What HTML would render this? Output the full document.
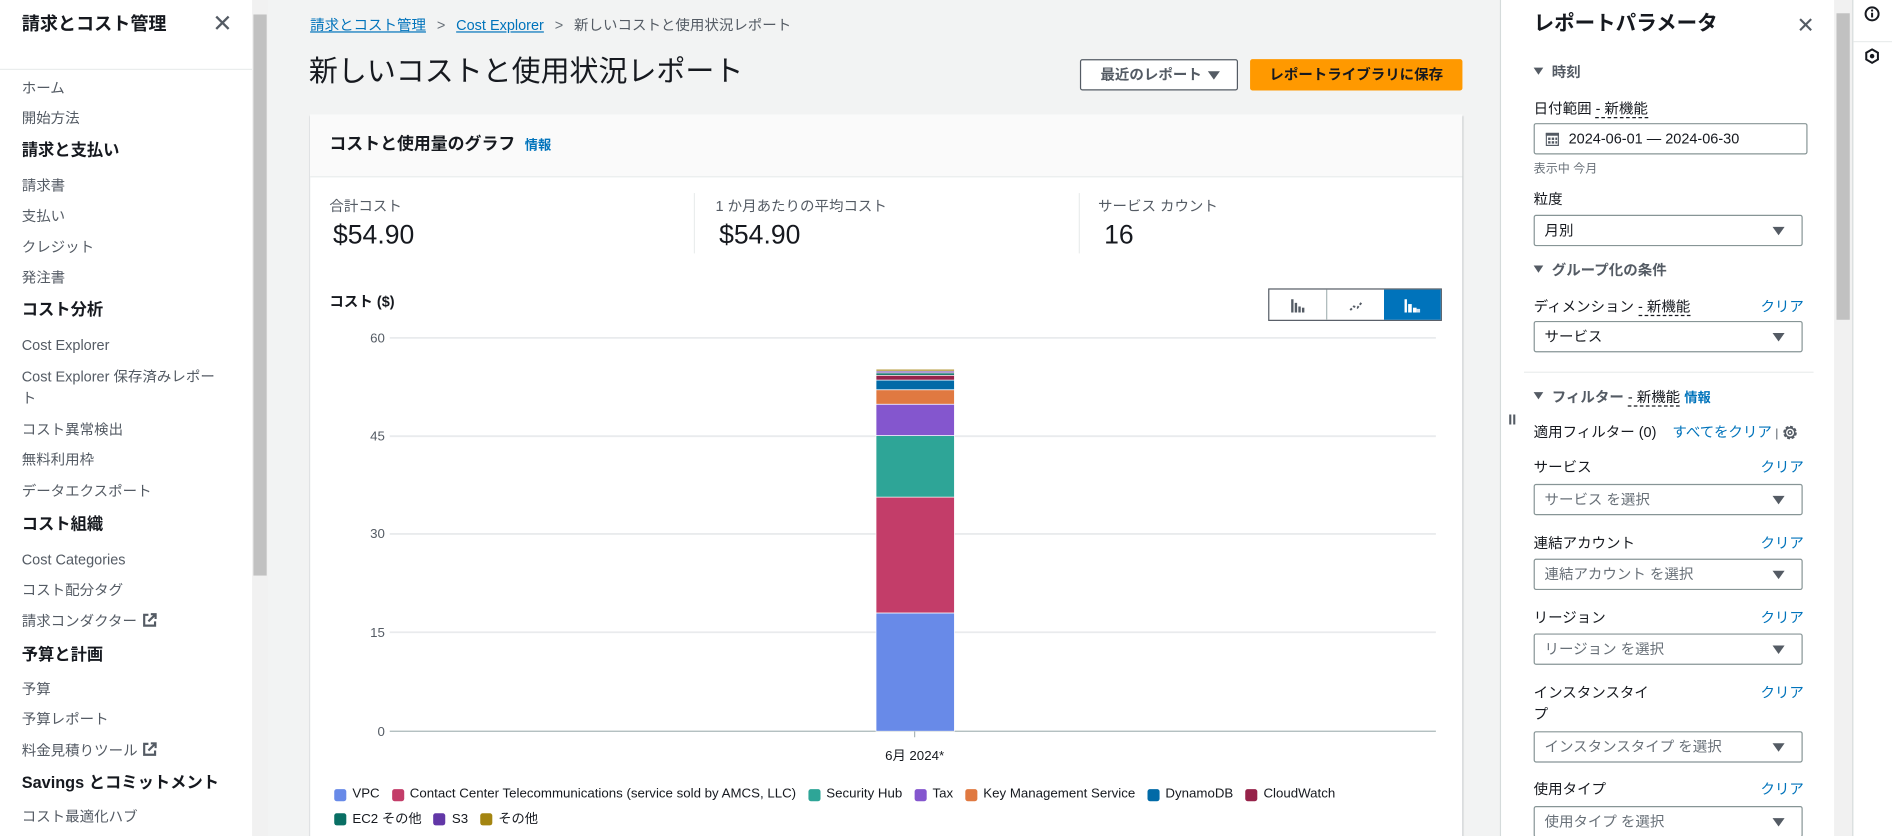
<!DOCTYPE html>
<html><head><meta charset="utf-8"><style>
*{box-sizing:border-box;margin:0;padding:0}
html,body{width:1892px;height:836px;overflow:hidden;background:#f2f3f3}
#clip{position:relative;width:1892px;height:836px;overflow:hidden}
#w{position:absolute;left:0;top:0;width:1568px;height:693px;overflow:hidden;transform:scale(1.20663);transform-origin:0 0;font-family:"Liberation Sans","Noto Sans CJK JP",sans-serif;color:#16191f;font-size:12px}
.a{position:absolute;white-space:nowrap}
.nav{left:0;top:0;width:209px;height:693px;background:#fff}
.ni{position:absolute;left:18px;font-size:12px;color:#545b64;line-height:16px}
.nh{position:absolute;left:18px;font-size:13.5px;font-weight:bold;color:#16191f;line-height:16px}
.lnk{color:#0073bb}
.sel{position:absolute;border:1px solid #879596;background:#fff;border-radius:2px;height:26px;font-size:12px;line-height:24px;padding-left:8px;color:#16191f}
.sel.ph{color:#687078}
.tri{position:absolute;right:14px;top:9px;width:0;height:0;border-left:5px solid transparent;border-right:5px solid transparent;border-top:7px solid #545b64}
.lbl{position:absolute;left:1271px;font-size:12px;line-height:16px;color:#16191f}
.clr{position:absolute;right:73px;font-size:12px;color:#0073bb;line-height:16px}
.dash{border-bottom:1px dashed #16191f}
.sh{position:absolute;left:1271px;font-size:12px;font-weight:bold;color:#545b64;line-height:16px}
.sh:before{content:"";display:inline-block;border-left:4px solid transparent;border-right:4px solid transparent;border-top:6px solid #545b64;margin-right:7px;vertical-align:2px}
.lg{display:inline-flex;align-items:center;margin-right:10px;font-size:11px;color:#16191f}
.lg i{display:inline-block;width:10px;height:10px;border-radius:2px;margin-right:5px}
.ext{display:inline-block;margin-left:4px;vertical-align:-1px}
</style></head><body><div id="clip"><div id="w">
<div class="a nav">
<div class="a" style="left:18px;top:12px;font-size:15px;font-weight:bold;line-height:18px">請求とコスト管理</div>
<div class="a" style="left:176px;top:9px;font-size:20px;color:#545b64;line-height:22px">✕</div>
<div class="a" style="left:0;top:57px;width:209px;height:1px;background:#eaeded"></div>
<div class="ni" style="top:65px">ホーム</div>
<div class="ni" style="top:90px">開始方法</div>
<div class="nh" style="top:117px">請求と支払い</div>
<div class="ni" style="top:146px">請求書</div>
<div class="ni" style="top:171px">支払い</div>
<div class="ni" style="top:197px">クレジット</div>
<div class="ni" style="top:222px">発注書</div>
<div class="nh" style="top:249px">コスト分析</div>
<div class="ni" style="top:278px">Cost Explorer</div>
<div class="ni" style="top:304px">Cost Explorer 保存済みレポー</div>
<div class="ni" style="top:322px">ト</div>
<div class="ni" style="top:348px">コスト異常検出</div>
<div class="ni" style="top:373px">無料利用枠</div>
<div class="ni" style="top:399px">データエクスポート</div>
<div class="nh" style="top:427px">コスト組織</div>
<div class="ni" style="top:456px">Cost Categories</div>
<div class="ni" style="top:481px">コスト配分タグ</div>
<div class="ni" style="top:507px">請求コンダクター<svg class="ext" width="12" height="12" viewBox="0 0 12 12"><path d="M5 1.5H1.5V10.5H10.5V7" fill="none" stroke="#545b64" stroke-width="1.8"/><path d="M7 1H11V5M11 1L5 7" fill="none" stroke="#545b64" stroke-width="1.8"/></svg></div>
<div class="nh" style="top:535px">予算と計画</div>
<div class="ni" style="top:563px">予算</div>
<div class="ni" style="top:588px">予算レポート</div>
<div class="ni" style="top:614px">料金見積りツール<svg class="ext" width="12" height="12" viewBox="0 0 12 12"><path d="M5 1.5H1.5V10.5H10.5V7" fill="none" stroke="#545b64" stroke-width="1.8"/><path d="M7 1H11V5M11 1L5 7" fill="none" stroke="#545b64" stroke-width="1.8"/></svg></div>
<div class="nh" style="top:641px">Savings とコミットメント</div>
<div class="ni" style="top:669px">コスト最適化ハブ</div>
</div>
<div class="a" style="left:209px;top:0;width:13px;height:693px;background:#f1f1f1"></div>
<div class="a" style="left:210px;top:12px;width:11px;height:465px;background:#c1c1c1"></div>
<div class="a" style="left:257px;top:13px;font-size:12px;line-height:16px"><span class="lnk" style="text-decoration:underline">請求とコスト管理</span><span style="color:#687078;margin:0 9px">&gt;</span><span class="lnk" style="text-decoration:underline">Cost Explorer</span><span style="color:#687078;margin:0 9px">&gt;</span><span style="color:#545b64">新しいコストと使用状況レポート</span></div>
<div class="a" style="left:256px;top:45px;font-size:24px;line-height:30px;color:#16191f">新しいコストと使用状況レポート</div>
<div class="a" style="left:895px;top:49px;width:131px;height:26px;border:1px solid #545b64;border-radius:2px;background:#fff;font-size:12px;font-weight:bold;color:#545b64;line-height:24px;padding-left:16px">最近のレポート<span style="position:absolute;right:14px;top:9px;border-left:5px solid transparent;border-right:5px solid transparent;border-top:7px solid #545b64"></span></div>
<div class="a" style="left:1036px;top:49px;width:176px;height:26px;background:#ff9900;border-radius:2px;font-size:12px;font-weight:bold;color:#16191f;line-height:26px;text-align:center">レポートライブラリに保存</div>
<div class="a" style="left:257px;top:95px;width:955px;height:620px;background:#fff;box-shadow:0 1px 1px rgba(0,28,36,.3),1px 1px 1px rgba(0,28,36,.15)"></div>
<div class="a" style="left:257px;top:95px;width:955px;height:52px;background:#fafafa;border-bottom:1px solid #eaeded"></div>
<div class="a" style="left:273px;top:110px;font-size:14px;font-weight:bold;line-height:18px">コストと使用量のグラフ <span class="lnk" style="font-size:11px;margin-left:4px">情報</span></div>
<div class="a" style="left:273px;top:162px;color:#545b64;font-size:12px">合計コスト</div>
<div class="a" style="left:276px;top:181px;font-size:22px;line-height:28px">$54.90</div>
<div class="a" style="left:575px;top:160px;width:1px;height:50px;background:#eaeded"></div>
<div class="a" style="left:593px;top:162px;color:#545b64;font-size:12px">1 か月あたりの平均コスト</div>
<div class="a" style="left:596px;top:181px;font-size:22px;line-height:28px">$54.90</div>
<div class="a" style="left:894px;top:160px;width:1px;height:50px;background:#eaeded"></div>
<div class="a" style="left:910px;top:162px;color:#545b64;font-size:12px">サービス カウント</div>
<div class="a" style="left:915px;top:181px;font-size:22px;line-height:28px">16</div>
<div class="a" style="left:273px;top:241px;font-size:12px;font-weight:bold">コスト ($)</div>
<div class="a" style="left:1051px;top:239px;width:144px;height:27px;border:1px solid #545b64;background:#fff;display:flex">
 <div style="width:48px;border-right:1px solid #aab7b8;position:relative"><svg style="position:absolute;left:18px;top:7px" width="12" height="12"><rect x="0" y="1" width="2" height="11" fill="#545b64"/><rect x="3" y="4" width="2" height="8" fill="#545b64"/><rect x="6" y="7" width="2" height="5" fill="#545b64"/><rect x="9" y="8" width="2" height="4" fill="#545b64"/></svg></div>
 <div style="width:48px;position:relative"><svg style="position:absolute;left:18px;top:7px" width="12" height="12"><path d="M1 10 L4 7 L7 8 L11 3" stroke="#545b64" stroke-width="1.6" stroke-dasharray="2 1.5" fill="none"/></svg></div>
 <div style="width:47px;background:#0073bb;position:relative"><svg style="position:absolute;left:17px;top:7px" width="13" height="12"><rect x="0" y="1" width="2" height="11" fill="#fff"/><rect x="3" y="5" width="3" height="7" fill="#fff"/><rect x="7" y="8" width="3" height="4" fill="#fff"/><rect x="10" y="9" width="3" height="3" fill="#cfe3f3"/></svg></div>
</div>
<svg class="a" style="left:257px;top:270px" width="955" height="370" font-family="Liberation Sans, sans-serif" font-size="11">
<g stroke="#e9ebed" stroke-width="1.5"><line x1="66" y1="10" x2="933" y2="10"/><line x1="66" y1="91.5" x2="933" y2="91.5"/><line x1="66" y1="172.5" x2="933" y2="172.5"/><line x1="66" y1="254" x2="933" y2="254"/></g>
<line x1="66" y1="336" x2="933" y2="336" stroke="#aab7b8"/>
<g fill="#545b64" text-anchor="end"><text x="62" y="14">60</text><text x="62" y="95">45</text><text x="62" y="176">30</text><text x="62" y="258">15</text><text x="62" y="340">0</text></g>
<g stroke="#fff" stroke-width="0.6">
<rect x="469" y="238" width="65" height="98" fill="#688ae8"/>
<rect x="469" y="142" width="65" height="96" fill="#c33d69"/>
<rect x="469" y="91" width="65" height="51" fill="#2ea597"/>
<rect x="469" y="65" width="65" height="26" fill="#8456ce"/>
<rect x="469" y="53" width="65" height="12" fill="#e07941"/>
<rect x="469" y="45" width="65" height="8" fill="#016aa7"/>
<rect x="469" y="41" width="65" height="4" fill="#962249"/>
<rect x="469" y="39" width="65" height="2" fill="#096f64"/>
<rect x="469" y="37.5" width="65" height="1.5" fill="#6237a7"/>
<rect x="469" y="36" width="65" height="1.5" fill="#a48511"/>
</g>
<line x1="501" y1="336" x2="501" y2="341" stroke="#aab7b8"/>
<text x="501" y="360" text-anchor="middle" fill="#16191f">6月 2024*</text>
</svg>
<div class="a" style="left:277px;top:649px;width:930px;white-space:normal;line-height:19px">
<span class="lg"><i style="background:#688ae8"></i>VPC</span><span class="lg"><i style="background:#c33d69"></i>Contact Center Telecommunications (service sold by AMCS, LLC)</span><span class="lg"><i style="background:#2ea597"></i>Security Hub</span><span class="lg"><i style="background:#8456ce"></i>Tax</span><span class="lg"><i style="background:#e07941"></i>Key Management Service</span><span class="lg"><i style="background:#016aa7"></i>DynamoDB</span><span class="lg"><i style="background:#962249"></i>CloudWatch</span><br>
<span class="lg"><i style="background:#096f64"></i>EC2 その他</span><span class="lg"><i style="background:#6237a7"></i>S3</span><span class="lg"><i style="background:#a48511"></i>その他</span>
</div>
<div class="a" style="left:1243px;top:0;width:277px;height:693px;background:#fff;border-left:1px solid #d5dbdb"></div>
<div class="a" style="left:1250px;top:341px;font-size:12px;font-weight:bold;color:#545b64">II</div>
<div class="a" style="left:1271px;top:9px;font-size:17px;font-weight:bold;line-height:22px">レポートパラメータ</div>
<div class="a" style="left:1489px;top:10px;font-size:18px;color:#545b64;line-height:22px">✕</div>
<div class="sh" style="top:52px">時刻</div>
<div class="lbl" style="top:82px">日付範囲 <span class="dash">- 新機能</span></div>
<div class="sel" style="left:1271px;top:102px;width:227px;padding-left:28px"><svg style="position:absolute;left:9px;top:7px" width="11" height="11"><rect x="0.5" y="0.5" width="10" height="10" fill="none" stroke="#545b64"/><rect x="0" y="0" width="11" height="2.5" fill="#545b64"/><g fill="#545b64"><rect x="2" y="4" width="2" height="2"/><rect x="5" y="4" width="2" height="2"/><rect x="8" y="4" width="1.5" height="2"/><rect x="2" y="7" width="2" height="2"/><rect x="5" y="7" width="2" height="2"/><rect x="8" y="7" width="1.5" height="2"/></g></svg>2024-06-01 — 2024-06-30</div>
<div class="a" style="left:1271px;top:131px;font-size:10px;color:#687078">表示中 今月</div>
<div class="lbl" style="top:157px">粒度</div>
<div class="sel" style="left:1271px;top:178px;width:223px">月別<span class="tri"></span></div>
<div class="sh" style="top:216px">グループ化の条件</div>
<div class="lbl" style="top:246px">ディメンション <span class="dash">- 新機能</span></div>
<div class="clr" style="top:246px">クリア</div>
<div class="sel" style="left:1271px;top:266px;width:223px">サービス<span class="tri"></span></div>
<div class="a" style="left:1263px;top:308px;width:240px;height:1px;background:#eaeded"></div>
<div class="sh" style="top:321px">フィルター <span class="dash" style="font-weight:normal;color:#16191f">- 新機能</span> <span class="lnk" style="font-size:11px">情報</span></div>
<div class="lbl" style="top:350px">適用フィルター (0)</div>
<div class="a" style="left:1386px;top:350px;font-size:12px;line-height:16px"><span class="lnk">すべてをクリア</span><span style="color:#545b64;font-size:10px"> |</span></div>
<svg class="a" style="left:1476px;top:351px" width="15" height="15" viewBox="0 0 16 16"><circle cx="8" cy="8" r="5" fill="none" stroke="#545b64" stroke-width="2" stroke-dasharray="2.5 1.4"/><circle cx="8" cy="8" r="4.2" fill="none" stroke="#545b64" stroke-width="1.4"/><circle cx="8" cy="8" r="1.6" fill="none" stroke="#545b64" stroke-width="1.3"/></svg>
<div class="lbl" style="top:379px">サービス</div><div class="clr" style="top:379px">クリア</div>
<div class="sel ph" style="left:1271px;top:401px;width:223px">サービス を選択<span class="tri"></span></div>
<div class="lbl" style="top:442px">連結アカウント</div><div class="clr" style="top:442px">クリア</div>
<div class="sel ph" style="left:1271px;top:463px;width:223px">連結アカウント を選択<span class="tri"></span></div>
<div class="lbl" style="top:504px">リージョン</div><div class="clr" style="top:504px">クリア</div>
<div class="sel ph" style="left:1271px;top:525px;width:223px">リージョン を選択<span class="tri"></span></div>
<div class="lbl" style="top:566px">インスタンスタイ</div><div class="lbl" style="top:584px">プ</div><div class="clr" style="top:566px">クリア</div>
<div class="sel ph" style="left:1271px;top:606px;width:223px">インスタンスタイプ を選択<span class="tri"></span></div>
<div class="lbl" style="top:646px">使用タイプ</div><div class="clr" style="top:646px">クリア</div>
<div class="sel ph" style="left:1271px;top:668px;width:223px">使用タイプ を選択<span class="tri"></span></div>
<div class="a" style="left:1520px;top:0;width:15px;height:693px;background:#f1f1f1"></div>
<div class="a" style="left:1522px;top:11px;width:11px;height:254px;background:#c1c1c1"></div>
<div class="a" style="left:1535px;top:0;width:33px;height:693px;background:#fff;border-left:1px solid #d5dbdb"></div>
<div class="a" style="left:1536px;top:34px;width:32px;height:1px;background:#eaeded"></div>
<svg class="a" style="left:1545px;top:5px" width="13" height="13" viewBox="0 0 14 14"><circle cx="7" cy="7" r="5.8" fill="none" stroke="#16191f" stroke-width="1.8"/><rect x="6.1" y="6" width="1.8" height="4.2" fill="#16191f"/><circle cx="7" cy="4" r="1" fill="#16191f"/></svg>
<svg class="a" style="left:1545px;top:40px" width="13" height="13" viewBox="0 0 14 14"><path d="M7 1 L12.2 4 L12.2 10 L7 13 L1.8 10 L1.8 4 Z" fill="none" stroke="#16191f" stroke-width="1.8"/><circle cx="7" cy="7" r="2" fill="#16191f"/></svg>
</div></div></body></html>
